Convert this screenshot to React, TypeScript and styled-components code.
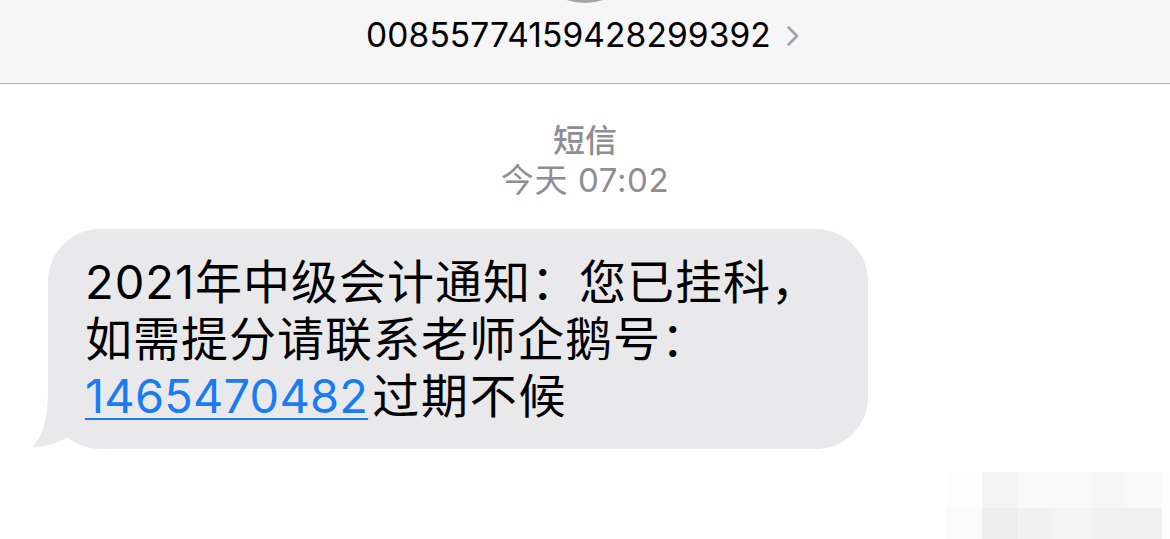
import React from "react";
import styled, { createGlobalStyle } from "styled-components";

const Global = createGlobalStyle`
  html, body { margin: 0; padding: 0; background: #ffffff; }
  body { width: 1170px; height: 539px; overflow: hidden; }
  * { box-sizing: border-box; }
`;

const FONT = `Inter, "Noto Sans CJK SC", "Noto Sans", sans-serif`;

const Page = styled.div`
  position: relative;
  width: 1170px;
  height: 539px;
  overflow: hidden;
  background: #ffffff;
  font-family: ${FONT};
  display: flex;
  flex-direction: column;
`;

const Header = styled.header`
  position: relative;
  height: 84px;
  flex: none;
  background: #f6f6f6;
  border-bottom: 1px solid #b4b4b4;
  display: flex;
  align-items: flex-start;
  justify-content: center;
  padding-top: 13px;
`;

const Avatar = styled.div`
  position: absolute;
  left: 527px;
  top: -113px;
  width: 116px;
  height: 116px;
  border-radius: 50%;
  background: #a4a4aa;
`;

const Contact = styled.div`
  display: flex;
  align-items: center;
  gap: 15px;
  padding-right: 4px;
`;

const Number = styled.span`
  font-size: 33.5px;
  line-height: 44px;
  color: #000;
  letter-spacing: 0.1px;
`;

const Chevron = styled.svg`
  width: 14px;
  height: 22px;
  margin-top: 2px;
`;

const Body = styled.main`
  display: flex;
  flex-direction: column;
  padding: 37px 0 0 48px;
`;

const Meta = styled.div`
  display: flex;
  flex-direction: column;
  align-items: center;
  width: 1074px;
  color: #8e8e93;
`;

const Service = styled.div`
  font-size: 32px;
  line-height: 40px;
  font-weight: 500;
`;

const Stamp = styled.div`
  font-size: 33px;
  line-height: 38px;
  letter-spacing: 0.6px;
`;

const Bubble = styled.div`
  position: relative;
  margin-top: 30px;
  width: 820px;
  height: 220px;
  background: #e9e9eb;
  border-radius: 52px;
  padding: 24px 20px 0 37px;
  font-size: 47px;
  line-height: 57px;
  color: #000;
  letter-spacing: 1px;
`;

const Tail = styled.svg`
  position: absolute;
  left: -20px;
  bottom: -1px;
  width: 84px;
  height: 60px;
  z-index: 0;
`;

const Line = styled.div`
  position: relative;
  z-index: 1;
  white-space: nowrap;
`;

const Link = styled.span`
  color: #1a7cf3;
  text-decoration: underline;
  text-decoration-thickness: 2px;
  text-underline-offset: 5px;
  letter-spacing: 0.2px;
  margin-right: 4px;
`;

const Rest = styled.span`
  letter-spacing: 1.8px;
`;

const Mosaic = styled.div`
  position: absolute;
  left: 946px;
  top: 472px;
  display: grid;
  grid-template-columns: repeat(7, 36px);
  grid-template-rows: 36px 36px;
`;

const Cell = styled.div<{ $c: string }>`
  background: ${(p) => p.$c};
`;

const cells = [
  "#fdfdfd", "#f4f4f4", "#fafafa", "#f9f9f9", "#f7f7f7", "#f9f9f9", "#fefefe",
  "#fbfbfb", "#eeeeee", "#f1f1f1", "#f3f3f3", "#f1f1f1", "#f0f0f0", "#fdfdfd",
];

export default function App() {
  return (
    <>
      <Global />
      <Page>
        <Header>
          <Avatar />
          <Contact>
            <Number>00855774159428299392</Number>
            <Chevron viewBox="0 0 14 22">
              <path d="M2.5 2.5 L11 11 L2.5 19.5" fill="none" stroke="#a2a2a7" strokeWidth="2.6" strokeLinecap="round" strokeLinejoin="round" />
            </Chevron>
          </Contact>
        </Header>
        <Body>
          <Meta>
            <Service>短信</Service>
            <Stamp>今天 07:02</Stamp>
          </Meta>
          <Bubble>
            <Tail viewBox="0 0 84 60">
              <path d="M20 2 C20 33 12 50 4 57 C17 57 30 53 40 47 C50 54 62 59 84 59 L84 2 Z" fill="#e9e9eb" />
            </Tail>
            <Line>2021年中级会计通知：您已挂科，</Line>
            <Line>如需提分请联系老师企鹅号：</Line>
            <Line>
              <Link>1465470482</Link>
              <Rest>过期不候</Rest>
            </Line>
          </Bubble>
        </Body>
        <Mosaic>
          {cells.map((c, i) => (
            <Cell key={i} $c={c} />
          ))}
        </Mosaic>
      </Page>
    </>
  );
}
